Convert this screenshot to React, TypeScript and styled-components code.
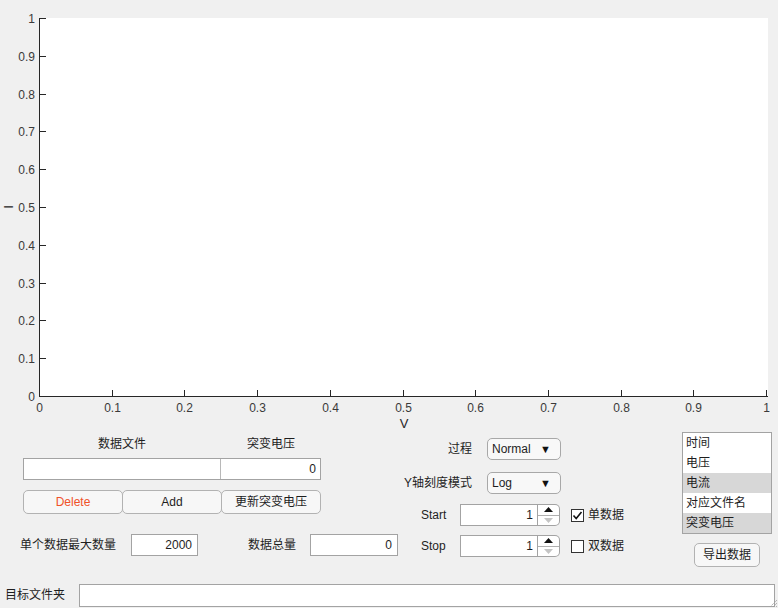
import React from 'react';
import styled, { createGlobalStyle } from 'styled-components';

const Global = createGlobalStyle`
  html, body { margin: 0; padding: 0; background: #f0f0f0; }
  body { font-family: "Liberation Sans", "Noto Sans CJK SC", sans-serif; }
  * { box-sizing: border-box; }
`;

const FONT = `"Liberation Sans", "Noto Sans CJK SC", sans-serif`;

const Root = styled.div`
  width: 778px;
  height: 608px;
  background: #f0f0f0;
  position: relative;
  overflow: hidden;
  display: flex;
  flex-direction: column;
  font-family: ${FONT};
  font-size: 12px;
  color: #1e1e1e;
`;

const ChartSvg = styled.svg`
  display: block;
  flex: none;
  overflow: visible;
`;

const Controls = styled.div`
  height: 142px;
  flex: none;
  display: flex;
`;

const LeftCol = styled.div`
  width: 400px;
  padding: 7px 0 0 20px;
  display: flex;
  flex-direction: column;
`;

const HeaderRow = styled.div`
  margin-left: 3px;
  display: grid;
  grid-template-columns: 198px 100px;
  height: 14px;
  line-height: 14px;
  text-align: center;
`;

const Table = styled.div`
  margin: 7px 0 0 3px;
  width: 298px;
  height: 22px;
  border: 1px solid #a3a3a3;
  background: #fff;
  display: grid;
  grid-template-columns: 197px 1fr;
`;

const Cell = styled.div<{ $divider?: boolean }>`
  border-right: ${(p) => (p.$divider ? '1px solid #b8b8b8' : 'none')};
  text-align: right;
  padding-right: 4px;
  line-height: 20px;
`;

const ButtonRow = styled.div`
  margin: 10px 0 0 3px;
  display: flex;
`;

const PushButton = styled.button<{ $danger?: boolean; $w?: number }>`
  width: ${(p) => p.$w ?? 100}px;
  height: 24px;
  margin-left: -1px;
  &:first-child { margin-left: 0; }
  border: 1px solid #b2b2b2;
  border-radius: 5px;
  background: #f7f7f7;
  font-family: ${FONT};
  font-size: 12px;
  color: ${(p) => (p.$danger ? '#f0522a' : '#1e1e1e')};
  padding: 0;
  line-height: 22px;
`;

const FieldRow = styled.div`
  margin-top: 20px;
  display: flex;
  align-items: center;
  height: 22px;
`;

const Label = styled.span<{ $ml?: number; $w?: number; $align?: string }>`
  margin-left: ${(p) => p.$ml ?? 0}px;
  ${(p) => (p.$w ? `width: ${p.$w}px;` : '')}
  text-align: ${(p) => p.$align ?? 'left'};
  white-space: nowrap;
  line-height: 16px;
  flex: none;
`;

const NumField = styled.div<{ $w: number; $ml?: number }>`
  margin-left: ${(p) => p.$ml ?? 0}px;
  width: ${(p) => p.$w}px;
  height: 22px;
  border: 1px solid #a3a3a3;
  background: #fff;
  text-align: right;
  padding-right: 5px;
  line-height: 20px;
  flex: none;
`;

const MidCol = styled.div`
  width: 240px;
  padding-top: 8px;
  display: flex;
  flex-direction: column;
`;

const MidRow = styled.div<{ $mt: number }>`
  margin-top: ${(p) => p.$mt}px;
  height: 22px;
  display: flex;
  align-items: center;
`;

const Dropdown = styled.div`
  margin-left: 15px;
  width: 74px;
  height: 22px;
  border: 1px solid #a8a8a8;
  border-radius: 5px;
  background: #f8f8f8;
  display: flex;
  align-items: center;
  justify-content: space-between;
  padding: 0 9px 0 4px;
  line-height: 20px;
`;

const Caret = styled.span`
  font-size: 11px;
  color: #111;
`;

const Spinner = styled.div`
  width: 100px;
  height: 22px;
  display: flex;
  flex: none;
`;

const SpinInput = styled.div`
  width: 78px;
  height: 22px;
  border: 1px solid #a3a3a3;
  background: #fff;
  text-align: right;
  padding-right: 4px;
  line-height: 20px;
`;

const SpinArrows = styled.div`
  width: 22px;
  height: 22px;
  border: 1px solid #a3a3a3;
  border-left: none;
  border-radius: 0 5px 5px 0;
  background: #fff;
  display: flex;
  flex-direction: column;
`;

const SpinHalf = styled.div<{ $top?: boolean }>`
  flex: 1;
  display: flex;
  align-items: center;
  justify-content: center;
  border-bottom: ${(p) => (p.$top ? '1px solid #b0b0b0' : 'none')};
`;

const CheckWrap = styled.div`
  margin-left: 11px;
  display: flex;
  align-items: center;
  gap: 4px;
`;

const CheckBox = styled.div`
  width: 13px;
  height: 13px;
  border: 1px solid #333;
  background: #fff;
  display: flex;
  align-items: center;
  justify-content: center;
`;

const RightCol = styled.div`
  width: 138px;
  padding: 2px 0 0 42px;
  display: flex;
  flex-direction: column;
`;

const ListBox = styled.div`
  width: 90px;
  height: 102px;
  border: 1px solid #a3a3a3;
  background: #fff;
  display: flex;
  flex-direction: column;
`;

const ListItem = styled.div<{ $sel?: boolean }>`
  height: 20px;
  line-height: 20px;
  padding-left: 3px;
  background: ${(p) => (p.$sel ? '#d7d7d7' : 'transparent')};
  white-space: nowrap;
`;

const ExportButton = styled(PushButton)`
  margin-top: 9px;
  margin-left: 12px;
  &:first-child { margin-left: 12px; }
`;

const Footer = styled.div`
  flex: 1;
  display: flex;
  align-items: flex-start;
  padding: 12px 0 0 5px;
`;

const FooterLabel = styled(Label)`
  line-height: 23px;
`;

const PathField = styled.div`
  margin-left: 14px;
  width: 696px;
  height: 23px;
  border: 1px solid #a3a3a3;
  background: #fff;
`;

const Grip = styled.svg`
  position: absolute;
  right: 0;
  bottom: 0;
`;

const X0 = 40;
const X1 = 767;
const Y0 = 396;
const Y1 = 18;

function Chart() {
  const ticks = Array.from({ length: 11 }, (_, i) => i);
  const tickStyle = { fontFamily: FONT, fontSize: 12, fill: '#3a3a3a' };
  return (
    <ChartSvg width={778} height={430} viewBox="0 0 778 430">
      <rect x={X0} y={Y1} width={X1 - X0 + 1} height={Y0 - Y1} fill="#fff" />
      <line x1={39.5} y1={Y1} x2={39.5} y2={Y0 + 1} stroke="#262626" strokeWidth={1} />
      <line x1={39} y1={Y0 + 0.5} x2={X1 + 1} y2={Y0 + 0.5} stroke="#262626" strokeWidth={1} />
      {ticks.map((i) => {
        const y = Math.round(Y0 - (i * (Y0 - Y1)) / 10) + 0.5;
        return (
          <g key={'y' + i}>
            <line x1={40} y1={y} x2={46} y2={y} stroke="#262626" strokeWidth={1} />
            <text x={35} y={y + 4} textAnchor="end" style={tickStyle}>
              {i === 0 ? '0' : i === 10 ? '1' : (i / 10).toFixed(1)}
            </text>
          </g>
        );
      })}
      {ticks.map((i) => {
        const x = Math.round(X0 + (i * (X1 - X0)) / 10) - 0.5;
        return (
          <g key={'x' + i}>
            <line x1={x} y1={Y0} x2={x} y2={Y0 - 6} stroke="#262626" strokeWidth={1} />
            <text x={x} y={412} textAnchor="middle" style={tickStyle}>
              {i === 0 ? '0' : i === 10 ? '1' : (i / 10).toFixed(1)}
            </text>
          </g>
        );
      })}
      <text x={404} y={428} textAnchor="middle" style={{ fontFamily: FONT, fontSize: 13, fill: '#262626' }}>
        V
      </text>
      <text
        x={0}
        y={0}
        transform="translate(12.5 207) rotate(-90)"
        textAnchor="middle"
        style={{ fontFamily: FONT, fontSize: 13, fill: '#262626' }}
      >
        I
      </text>
    </ChartSvg>
  );
}

function SpinBox({ value }: { value: string }) {
  return (
    <Spinner>
      <SpinInput>{value}</SpinInput>
      <SpinArrows>
        <SpinHalf $top>
          <svg width="9" height="5" viewBox="0 0 9 5">
            <path d="M0 5 L4.5 0 L9 5 Z" fill="#111" />
          </svg>
        </SpinHalf>
        <SpinHalf>
          <svg width="9" height="5" viewBox="0 0 9 5">
            <path d="M0 0 L4.5 5 L9 0 Z" fill="#c4c4c4" />
          </svg>
        </SpinHalf>
      </SpinArrows>
    </Spinner>
  );
}

function Check({ checked, label }: { checked?: boolean; label: string }) {
  return (
    <CheckWrap>
      <CheckBox>
        {checked && (
          <svg width="11" height="11" viewBox="0 0 11 11">
            <path d="M1.5 5.5 L4.2 8.5 L9.5 2" fill="none" stroke="#111" strokeWidth="1.6" />
          </svg>
        )}
      </CheckBox>
      <Label>{label}</Label>
    </CheckWrap>
  );
}

export default function App() {
  return (
    <Root>
      <Global />
      <Chart />
      <Controls>
        <LeftCol>
          <HeaderRow>
            <span>数据文件</span>
            <span>突变电压</span>
          </HeaderRow>
          <Table>
            <Cell $divider />
            <Cell>0</Cell>
          </Table>
          <ButtonRow>
            <PushButton $danger>Delete</PushButton>
            <PushButton>Add</PushButton>
            <PushButton>更新突变电压</PushButton>
          </ButtonRow>
          <FieldRow>
            <Label>单个数据最大数量</Label>
            <NumField $ml={15} $w={67}>2000</NumField>
            <Label $ml={50}>数据总量</Label>
            <NumField $ml={14} $w={88}>0</NumField>
          </FieldRow>
        </LeftCol>
        <MidCol>
          <MidRow $mt={0}>
            <Label $w={72} $align="right">过程</Label>
            <Dropdown>
              <span>Normal</span>
              <Caret>▼</Caret>
            </Dropdown>
          </MidRow>
          <MidRow $mt={12}>
            <Label $w={72} $align="right">Y轴刻度模式</Label>
            <Dropdown>
              <span>Log</span>
              <Caret>▼</Caret>
            </Dropdown>
          </MidRow>
          <MidRow $mt={10}>
            <Label $ml={21} $w={39}>Start</Label>
            <SpinBox value="1" />
            <Check checked label="单数据" />
          </MidRow>
          <MidRow $mt={9}>
            <Label $ml={21} $w={39}>Stop</Label>
            <SpinBox value="1" />
            <Check label="双数据" />
          </MidRow>
        </MidCol>
        <RightCol>
          <ListBox>
            <ListItem>时间</ListItem>
            <ListItem>电压</ListItem>
            <ListItem $sel>电流</ListItem>
            <ListItem>对应文件名</ListItem>
            <ListItem $sel>突变电压</ListItem>
          </ListBox>
          <ExportButton $w={66}>导出数据</ExportButton>
        </RightCol>
      </Controls>
      <Footer>
        <FooterLabel>目标文件夹</FooterLabel>
        <PathField />
      </Footer>
      <Grip width="9" height="9" viewBox="0 0 9 9">
        <path d="M8 1 L1 8 M8 4 L4 8 M8 7 L7 8" stroke="#9a9a9a" strokeWidth="1" strokeDasharray="1 1" />
      </Grip>
    </Root>
  );
}
